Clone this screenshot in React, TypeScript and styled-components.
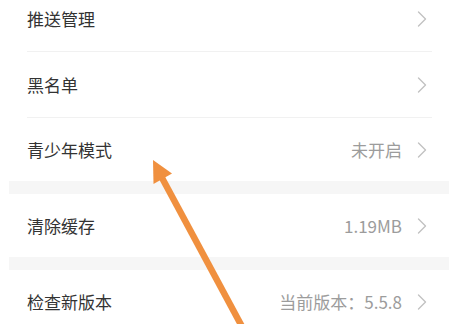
import React from "react";
import styled, { createGlobalStyle } from "styled-components";

const GlobalStyle = createGlobalStyle`
  html, body {
    margin: 0;
    padding: 0;
    background: #ffffff;
    overflow: hidden;
  }
  body {
    font-family: "Noto Sans CJK SC", "Noto Sans", sans-serif;
  }
`;

const Page = styled.div`
  position: relative;
  width: 451px;
  height: 324px;
  overflow: hidden;
  background: #ffffff;
  box-sizing: border-box;
  padding: 0 2px 0 9px;
`;

const List = styled.div`
  display: flex;
  flex-direction: column;
  margin-top: -14px;
`;

const Group = styled.section`
  display: flex;
  flex-direction: column;
  background: #ffffff;
`;

const Band = styled.div`
  height: 13px;
  background: #f6f6f6;
`;

const Row = styled.div<{ $last?: boolean }>`
  display: flex;
  align-items: center;
  box-sizing: border-box;
  height: ${(p) => (p.$last ? "63px" : "66px")};
  margin: 0 17px 0 18px;
  padding-right: 5px;
  border-bottom: ${(p) => (p.$last ? "none" : "1px solid #f1f1f1")};
`;

const Label = styled.span`
  flex: 1;
  font-size: 17px;
  color: #333333;
  letter-spacing: 0;
  white-space: nowrap;
`;

const Value = styled.span`
  font-size: 17px;
  color: #9c9c9c;
  margin-right: 15px;
  white-space: nowrap;
`;

const ChevronBox = styled.span`
  display: flex;
  width: 10px;
  height: 16px;
`;

const ArrowLayer = styled.svg`
  position: absolute;
  left: 0;
  top: 0;
  pointer-events: none;
`;

const Chevron = () => (
  <ChevronBox>
    <svg width="10" height="16" viewBox="0 0 10 16">
      <polyline
        points="1.5,1 8.5,8 1.5,15"
        fill="none"
        stroke="#c2c2c2"
        strokeWidth="1.4"
        strokeLinecap="round"
        strokeLinejoin="round"
      />
    </svg>
  </ChevronBox>
);

type Item = { label: string; value?: string };

const groups: Item[][] = [
  [{ label: "推送管理" }, { label: "黑名单" }, { label: "青少年模式", value: "未开启" }],
  [{ label: "清除缓存", value: "1.19MB" }],
  [{ label: "检查新版本", value: "当前版本：5.5.8" }],
];

export default function App() {
  return (
    <>
      <GlobalStyle />
      <Page>
        <List>
          {groups.map((g, gi) => (
            <React.Fragment key={gi}>
              {gi > 0 && <Band />}
              <Group>
                {g.map((it, i) => (
                  <Row key={it.label} $last={i === g.length - 1}>
                    <Label>{it.label}</Label>
                    {it.value && <Value>{it.value}</Value>}
                    <Chevron />
                  </Row>
                ))}
              </Group>
            </React.Fragment>
          ))}
        </List>
        <ArrowLayer width="451" height="324" viewBox="0 0 451 324">
          <line x1="161" y1="176" x2="246" y2="334" stroke="#f0903f" strokeWidth="6.5" />
          <polygon points="153,160 153.5,184 172,173.5" fill="#f0903f" />
        </ArrowLayer>
      </Page>
    </>
  );
}
